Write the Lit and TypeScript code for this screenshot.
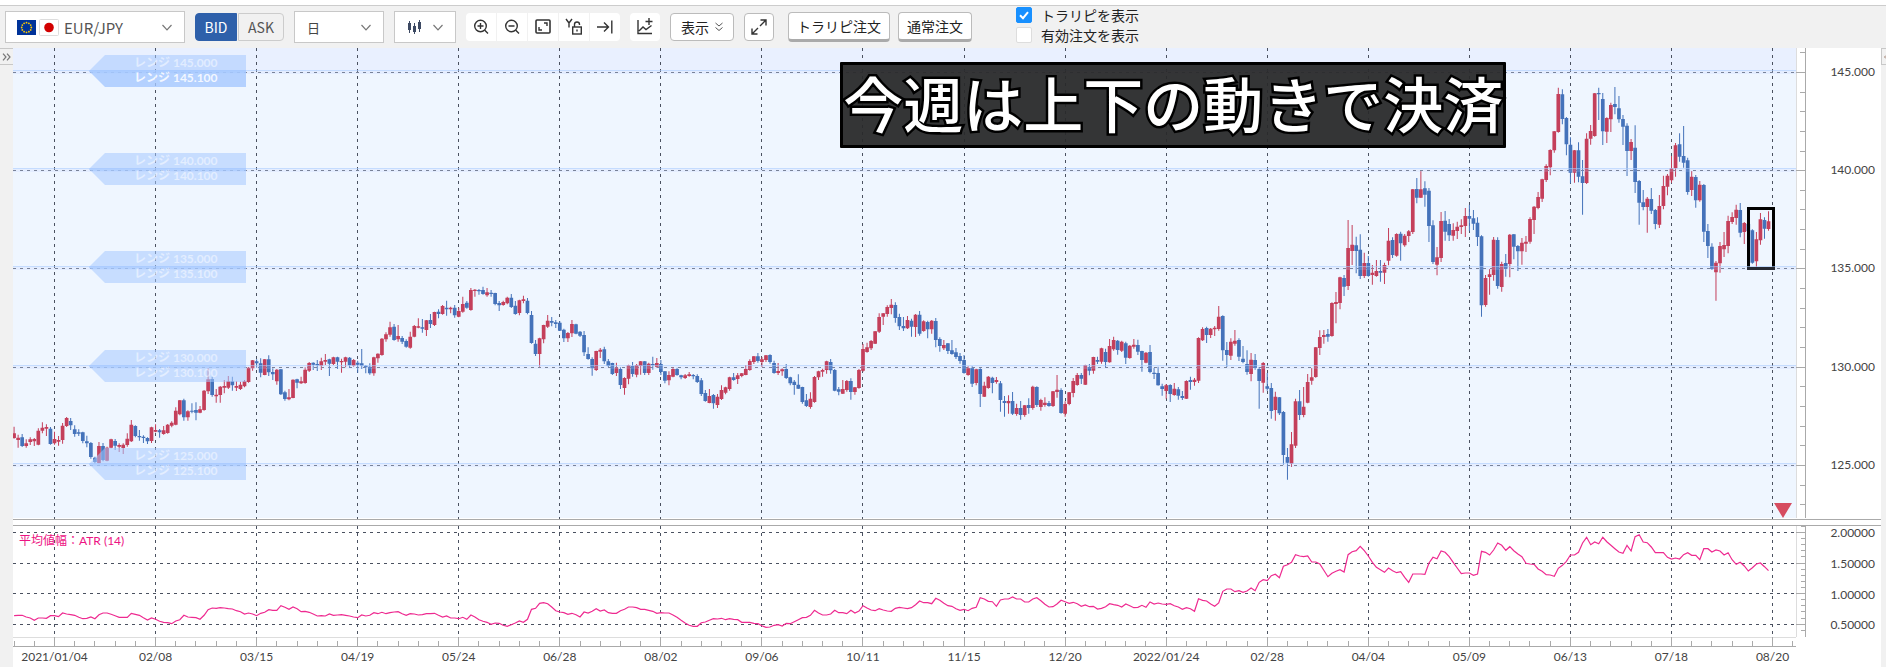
import { LitElement, html, svg, css } from "lit";
import { customElement, state } from "lit/decorators.js";

/* Candles are "colour high,bodyTop,bodyBottom,low"; r = up day, b = down day.
   Levels are thirds of a pixel below the block's base level. */
const CANDLES: { base: number; rows: string }[] = [
  {
    base: 960,
    rows: `r320,340,354,356 r344,353,360,383 b342,352,378,381 r358,370,378,383 r352,358,366,375 r354,357,364,378
r325,332,374,376 r307,323,332,340 r313,321,326,348 b321,326,372,374 r335,357,370,374 r348,360,365,377
r309,317,360,371 r291,294,318,321 b294,303,316,330 b316,328,342,350 b328,337,341,348 b335,337,363,370
b347,364,370,382 b366,369,411,416 b410,413,426,432 r366,378,430,433 b369,378,420,424 r380,383,422,424
r356,358,383,385 b357,363,377,390 r370,375,380,396 r370,374,384,402 r340,356,375,380 r300,314,364,366
b316,318,348,352 b330,348,352,362 b346,350,354,369 b352,354,364,372 r320,322,363,369 r313,330,335,337
b327,331,337,353 r318,331,342,344 r312,314,339,341 r304,308,317,322 r262,272,314,316 r240,241,283,286
b236,241,292,302 r271,274,292,302 b250,272,275,280 b247,270,278,301 r258,268,278,280 r210,212,270,272
r145,178,214,222 b170,177,225,230 r207,224,229,248 r198,200,225,248 r180,198,203,220 r168,184,203,207
b170,184,196,212 r184,198,203,213 r185,194,207,210 r180,184,199,202 r141,143,186,188 r120,121,145,152
b118,124,130,143 b115,130,158,172 r117,118,165,166 b106,118,157,168 b145,156,163,180 r147,149,184,194
b147,148,223,225 b212,217,237,242 r207,232,238,241 r178,179,234,235 b176,178,188,205 r170,184,190,192
r142,149,189,191 r126,129,152,156 b127,128,134,150 b120,132,136,153 r113,124,137,150 r102,120,125,135
b116,118,131,168 r110,112,132,135 b110,112,125,147 r116,123,127,158 r110,112,125,142 b111,113,136,144
r117,120,137,140 b122,128,134,158 b87,130,137,147 b135,137,142,160 b130,140,160,164 r110,112,160,167
r100,101,115,128 r54,56,105,107 r37,43,58,65 r5,22,44,50 b12,20,60,62 r15,48,58,65 b48,54,65,72
b58,63,80,83 r35,50,83,86 r15,18,50,52 r-5,19,23,25 b-3,22,26,38 r0,1,30,48 b-18,0,12,24 r-25,-24,15,18`,
  },
  {
    base: 120,
    rows: `b808,815,822,835 r795,798,822,824 b782,803,808,827 r800,803,808,820 b795,803,826,833 r803,813,830,832
r770,792,815,818 b783,788,803,806`,
  },
  {
    base: 780,
    rows: `r84,90,150,152 r87,89,93,110 b87,90,94,104 b80,90,102,104 r84,97,106,110 b90,98,102,110 b98,99,132,136
b123,129,136,153 r122,126,135,137 r110,113,130,133 b102,113,141,144 b123,137,162,164 r119,121,159,166
r107,118,123,130 b114,122,159,163 b153,165,249,251 b240,251,282,288 r233,235,282,320 r194,195,238,250
r165,182,200,204 b171,183,188,199 b180,187,192,204 b184,188,212,213 b206,209,235,246 r216,219,235,246
r180,192,220,231 b191,193,221,223 b213,215,227,231 b213,225,277,288 b262,282,297,299 b292,297,325,347
r272,273,330,333 r264,269,275,294 b260,268,304,312 b297,304,318,321 b308,309,342,345 r308,323,339,348
b322,327,375,387 r352,354,384,404 r314,316,356,373 b306,318,342,350 r312,315,344,352 r303,304,318,344
b303,304,339,345 r308,311,339,345 b290,312,316,329 r294,309,321,323 b300,312,336,345 b333,334,362,370
r334,345,361,376 r322,327,350,352 b323,327,345,347 b344,346,352,358 r342,346,354,357 r336,343,348,350
b342,345,349,358 b343,348,366,369 b354,361,402,408 b390,399,423,425 r387,408,429,430 b402,405,430,446
r402,410,435,444 r376,390,417,420 r380,382,398,403 r350,352,387,392 b339,352,360,362 r339,346,357,372
r339,340,348,352 r315,327,345,346 r298,303,330,332 r288,289,306,312 b279,289,303,308 r291,298,306,321
r285,286,300,306 b283,285,306,311 b302,309,339,341 r309,333,339,345 r325,328,334,347 b312,327,354,357
b350,352,370,376 b360,365,375,404 b343,374,386,387 b380,381,426,431 b402,421,438,441 r397,416,441,446
r348,351,426,428 r332,334,352,360 r326,330,335,350 r302,304,330,341 b297,306,331,341 b327,330,392,394
b381,388,395,406 r360,387,401,402 r360,363,390,395 b355,363,396,419 r381,382,396,404 r327,330,384,386
r252,267,332,335 r248,262,276,278 r240,243,265,270 r213,214,251,252 r160,171,215,219 r159,160,170,195
r136,141,162,170 r117,134,144,163 b127,135,174,188 b161,171,199,210 b171,198,205,213 r168,180,205,207
b176,182,200,230 r162,164,201,231 b153,164,221,227 r181,184,213,215 b182,186,208,235 r180,182,208,221
b174,183,240,262 b232,237,258,275 r240,255,265,270 b249,250,273,282 b240,271,282,284 b264,277,291,297
b279,288,303,311 b285,300,339,341 r319,324,345,347 b319,324,371,381 r326,328,369,376 b323,327,402,441
r365,377,410,411 r348,350,384,386 b350,353,369,400 r351,360,366,371 b363,370,420,455 b408,423,429,470
r406,423,430,461 b396,423,461,465 r431,444,462,467 b423,444,465,479 r435,436,465,470 b415,435,444,461
r377,380,444,449 b379,381,435,441 r416,420,441,452 r412,428,435,440 b423,429,438,440 r393,394,438,441
r345,389,396,413 b385,390,459,461 r424,432,461,470 r396,397,432,436 r354,363,399,412 r339,345,375,377
b339,345,356,372 r314,315,374,375 b312,321,332,346 r290,291,332,341 b290,300,305,312 r263,265,305,311
b266,276,306,322 r237,258,307,308 r230,240,268,272 b240,242,270,284 r242,245,272,276 b245,250,293,312
r255,257,294,296 r237,254,260,266 b239,255,275,285 b272,273,300,335 r276,278,308,310 b255,276,336,340
b324,338,342,357 b320,339,376,377 b371,379,387,407 r372,376,393,416 b373,375,402,426 r369,386,405,407
b381,388,407,419 b393,408,414,420 r361,363,416,417 b350,360,366,389 r354,359,366,377 r232,234,362,369
r202,207,241,243 b200,204,225,249 r204,206,225,234 r198,203,208,228 r138,170,207,212 b166,168,271,302
b246,270,285,321 r235,245,287,300 r210,242,251,257 b235,240,290,303 b258,296,306,310 b271,312,336,344
r279,299,342,364 b282,300,324,329 b321,327,363,446 r306,309,368,398 b339,379,386,392 b369,384,453,476
r395,410,450,482 b411,412,460,465 b453,456,585,614 b564,591,608,659 r516,553,611,621 r416,424,557,564
b390,424,465,480 r381,440,465,472 r342,366,428,430 r324,352,362,374 r261,262,351,353 r211,231,264,285
r210,225,231,251 b207,222,230,245 r127,129,228,230 r96,126,132,190 r50,52,129,148 b45,54,80,108`,
  },
  {
    base: 450,
    rows: `r210,294,408,420 r225,284,303,345 b260,286,303,370 b253,299,378,387 r308,339,378,384 b318,339,378,380
r345,368,375,404 r330,363,378,380 b330,363,368,395 r338,345,368,402 r234,272,332,346 b262,270,315,324
r250,252,317,320 b245,251,280,332 r252,257,286,290 r240,244,258,276 r117,118,246,252 b84,117,143,160
r63,118,143,144 b94,115,134,170 b114,122,228,276 b211,226,336,342 r291,322,344,376 r186,213,324,336
b183,212,245,272 b207,222,256,273 r220,240,257,272 r215,230,243,267 r208,226,231,252 r174,198,228,261
b164,198,206,243 b180,205,221,240 b202,218,261,288 b256,259,466,500 r375,384,465,470 r357,373,381,434
r261,269,375,392 b262,270,408,416 r335,342,411,425 b312,339,356,380 r252,254,342,382 b252,253,290,328
b285,288,304,363 r264,278,304,344 r258,275,281,306 r202,207,275,281 r168,170,210,252 r126,141,174,178
r86,88,146,156`,
  },
  {
    base: 150,
    rows: `r343,348,390,396 r298,300,352,376 r243,244,301,308 r113,132,246,248 b118,133,207,223 b201,204,283,316
b262,284,368,400 r300,301,368,398 b277,301,380,397 b330,379,399,494 r250,266,399,402 r225,243,266,284
r129,130,258,260 b113,129,133,210 b129,147,244,285 r202,204,245,279 r158,165,208,246 b111,162,171,193
b138,175,208,218 b195,207,230,285 b220,227,303,378 r267,276,303,330 b226,293,396,429 b390,393,458,524
b420,457,471,481 r441,446,471,548 b414,447,482,492 b477,480,522,538 r435,468,524,534 r377,408,468,478
r372,377,410,436 r318,355,391,398 r279,286,355,380 b250,283,320,335 b228,318,338,353 b323,331,426,434
r363,380,420,438 b375,381,451,473 r393,404,451,455 b402,405,545,576 b522,543,588,624 b580,590,657,660
r633,638,667,752 r576,588,640,668 r546,585,598,621 r497,513,588,610 r487,501,516,522 r464,479,504,524
b459,480,548,562 r516,519,546,582 b519,522,543,550 b538,541,638,641 r546,568,634,654 r489,508,571,584
b502,510,536,566 r484,514,537,542`,
  },
];

/* ATR(14), one value per candle, same units as above. */
const ATR: { base: number; rows: string }[] = [
  {
    base: 960,
    rows: `887 886 886 891 894 901 894 894 895 887 887 890 879 882 884 886 892 896 895 891 896 884 879 879 883 887 892
892 892 880 883 886 893 900 894 898 904 907 908 911 903 899 886 891 892 893 898 886 869 864 865 863 864 866 867 872
875 882 879 882 887 880 877 869 871 871 857 862 868 861 866 875 874 877 882 888 887 888 882 886 885 884 886 888 891
893 885 888 886 878 881 877 881 878 876 875 881 886 881 882 885 884 881 881 880 886 891 888 894 894 896 892 898 885
891 899`,
  },
  {
    base: 1500,
    rows: `364 367 373 369 370 376 379 374 369 363 367 358 328 325 310 308 311 321 332 336 338 343 340 344 351 336
339 334 326 333 330 338 340 340 332 328 321 321 323 328 328 331 334 340 338 339 339 345 352 361 369 376 379 379 368
366 361 356 357 355 359 356 358 359 367 367 367 370 371 377 382 381 376 374 378 370 371 365 359 353 352 346 331 339
345 345 342 331 338 338 341 331 339 333 317 324 330 332 326 330 333 334 325 322 324 326 323 314 303 308 308 311 295
301 310 317 319 326 331 328 332 325 322 293 297 304 305 319 300 297 297 291 297 297 306 306 297 293 302 313 321 320
312 301 305 310 307 311 319 315 320 319 327 325 320 311 314 316 321 312 317 323 322 316 322 306 312 309 312 313 311
317 321 328 323 326 334 296 301 303 312 319 309 274 267 267 275 272 277 273 264 272 247 239 242 227 223 233 199 194
187 164 168 170 168 186 186 192 211 230 220 214 209 216 164 155 152 139 152 168 187 202 209 217 204 212 218 215 232
247 222 222 222 223 189 172 176 153 157 170 187 204 221 219 219 226 222 154 157 165 150 129 136 151 140 152 162`,
  },
  {
    base: 1320,
    rows: `350 370 372 373 387 394 404 405 409 385 376 364 345 345 337 309 292 314 306 311 292 305 316 326 336 340 316
333 290 284 306 308 321 338 338 338 352 357 354 357 344 338 346 346 359 326 326 336 330 333 345 338 359 373 367 378
393 383 372 369 380 392`,
  },
];

const PLOT_W = 1783;
const PRICE_TOP = 48;
const PRICE_H = 471;
const ATR_TOP = 526;
const ATR_H = 111;
const STEP = 4.0425;
const FIRST = 41.5 - 10 * STEP;

const pct = (x: number) => `${((x / PLOT_W) * 100).toFixed(4)}%`;
const priceY = (p: number) => 24.4 + (145 - p) * 19.65;
const atrY = (v: number) => 6.4 + (2 - v) * 61.2;

const candles = CANDLES.flatMap(({ base, rows }) =>
  rows.trim().split(/\s+/).map((row) => ({
    up: row[0] === "r",
    v: row.slice(1).split(",").map((n) => (base + Number(n)) / 3 - PRICE_TOP),
  })),
);
const atrPoints = ATR.flatMap(({ base, rows }) =>
  rows.trim().split(/\s+/).map((n) => (base + Number(n)) / 3 - ATR_TOP),
)
  .map((y, i) => `${(FIRST + i * STEP).toFixed(1)},${y.toFixed(1)}`)
  .join(" ");

const DATES = [
  "2021/01/04", "02/08", "03/15", "04/19", "05/24", "06/28", "08/02", "09/06", "10/11",
  "11/15", "12/20", "2022/01/24", "02/28", "04/04", "05/09", "06/13", "07/18", "08/20",
];
const dateX = (k: number) => 41.5 + k * 101.06;
const PRICES = [145, 140, 135, 130, 125];

const chevron = html`<svg class="chev" width="10" height="7" viewBox="0 0 10 7" aria-hidden="true">
  <path d="M.5 1 5 5.8 9.5 1" fill="none" stroke="#777" stroke-width="1.2" />
</svg>`;

@customElement("trade-toolbar")
export class TradeToolbar extends LitElement {
  @state() side = "BID";

  static styles = css`
    :host {
      display: flex;
      align-items: center;
      gap: 10px;
      height: 42px;
      padding-left: 5px;
      background: #f1f1f1;
      border-top: 1px solid #ccc;
      font: 14px "Noto Sans CJK JP", sans-serif;
      color: #222;
    }
    button, select, input { font: inherit; color: inherit; margin: 0; }
    button { padding: 0; cursor: pointer; }
    .combo {
      display: flex;
      align-items: center;
      box-sizing: border-box;
      height: 32px;
      padding: 0 12px;
      background: #fff;
      border: 1px solid #c8c8c8;
    }
    .combo select {
      flex: 1;
      min-width: 0;
      appearance: none;
      border: 0;
      padding: 0;
      background: none;
      color: #555;
      font-size: 15px;
    }
    .pair { width: 180px; gap: 3px; padding-left: 11px; }
    .pair select { margin-left: 2px; }
    .span { width: 90px; }
    .span select { font-size: 13px; color: #444; }
    .kind { width: 62px; position: relative; justify-content: space-between; }
    .kind select { position: absolute; inset: 0; opacity: 0; }
    .sides { display: flex; gap: 1px; }
    .sides button {
      box-sizing: border-box;
      width: 46px;
      height: 28px;
      border: 1px solid #ccc;
      border-radius: 0 4px 4px 0;
      background: #f1f1f1;
      color: #555;
    }
    .sides button:first-child { width: 42px; border-radius: 4px 0 0 4px; }
    .sides button.on { background: #2e60aa; border-color: #2e60aa; color: #fff; }
    .tools { display: flex; gap: 1px; border-radius: 4px; overflow: hidden; }
    .tool {
      display: flex;
      align-items: center;
      justify-content: center;
      box-sizing: border-box;
      width: 30px;
      height: 28px;
      border: 0;
      background: #fff;
    }
    .solo { border-radius: 4px; }
    .boxed { border: 1px solid #bbb; border-radius: 4px; }
    .view { width: 64px; gap: 6px; }
    .orders { display: flex; gap: 8px; margin-left: 4px; }
    .order {
      height: 30px;
      padding: 0 8px;
      border: 1px solid #bbb;
      border-bottom: 3px solid #aaa;
      border-radius: 4px;
      background: #fff;
      line-height: 22px;
    }
    .checks { display: grid; grid-template-rows: 21px 20px; margin-left: 34px; margin-bottom: 5px; }
    .check { display: flex; align-items: center; gap: 9px; }
    .check input {
      appearance: none;
      width: 16px;
      height: 16px;
      border: 1px solid #ddd;
      border-radius: 2px;
      background: #fff;
    }
    .check input:checked {
      border-color: #1890ff;
      background: #1890ff
        url("data:image/svg+xml,%3Csvg xmlns='http://www.w3.org/2000/svg' viewBox='0 0 14 14'%3E%3Cpath d='M3 7.2l3 3 5-6' fill='none' stroke='white' stroke-width='2'/%3E%3C/svg%3E");
    }
  `;

  icon(body: unknown) {
    return html`<svg width="18" height="18" viewBox="0 0 18 18" fill="none" stroke="#333" stroke-width="1.4" aria-hidden="true">${body}</svg>`;
  }

  render() {
    const stars = Array.from({ length: 12 }, (_, i) => {
      const a = (i * Math.PI) / 6;
      return svg`<circle cx=${9.5 + 4.8 * Math.sin(a)} cy=${7.5 - 4.8 * Math.cos(a)} r=".9" fill="#fc0" />`;
    });
    return html`
      <label class="combo pair">
        <svg width="19" height="15" aria-hidden="true"><rect width="19" height="15" fill="#039" />${stars}</svg>
        <svg width="20" height="17" aria-hidden="true">
          <rect x=".5" y=".5" width="19" height="16" rx="1" fill="#fff" stroke="#ddd" />
          <circle cx="10" cy="8.5" r="4.8" fill="#d20000" />
        </svg>
        <select aria-label="通貨ペア"><option>EUR/JPY</option></select>
        ${chevron}
      </label>
      <div class="sides">
        ${["BID", "ASK"].map(
          (s) => html`<button class=${this.side === s ? "on" : ""} @click=${() => (this.side = s)}>${s}</button>`,
        )}
      </div>
      <label class="combo span"><select aria-label="足種"><option>日</option></select>${chevron}</label>
      <label class="combo kind">
        <svg width="15" height="17" viewBox="0 0 15 17" stroke="#3d4a63" aria-hidden="true">
          <path d="M2.5 2v12M7.5 4v11M12.5 1v12" />
          <path d="M2.5 4v7M7.5 7v6M12.5 3v7" stroke-width="3" />
        </svg>
        <select aria-label="チャート種類"><option>ローソク足</option></select>
        ${chevron}
      </label>
      <div class="tools">
        <button class="tool" aria-label="拡大">
          ${this.icon(svg`<circle cx="8.5" cy="8" r="5.8" /><path d="M12.8 12.3 16 15.5M5.5 8h6M8.5 5v6" />`)}
        </button>
        <button class="tool" aria-label="縮小">
          ${this.icon(svg`<circle cx="8.5" cy="8" r="5.8" /><path d="M12.8 12.3 16 15.5M5.5 8h6" />`)}
        </button>
        <button class="tool" aria-label="全体">
          ${this.icon(svg`<rect x="2" y="2" width="14" height="13" rx="1" stroke-width="1.6" /><path d="M10 5h3v3M8 12H5V9" />`)}
        </button>
        <button class="tool" aria-label="Y軸固定">
          ${this.icon(svg`<path d="M1 1l3 4 3-4M4 5v4.5" /><rect x="7.7" y="9" width="8.6" height="7" /><path d="M9.5 9V6.2c0-3 5-3 5 0v.8M12 11.5v2" />`)}
        </button>
        <button class="tool" aria-label="最新へ">
          ${this.icon(svg`<path d="M1 9h11.5M8 4.5 12.5 9 8 13.5M15.8 2.5v13" />`)}
        </button>
      </div>
      <button class="tool solo" aria-label="テクニカル追加">
        ${this.icon(svg`<path d="M2 2v13.5h14M3 13l4-4 3 2.5 5.5-4M13 0v7M9.5 3.5h7" />`)}
      </button>
      <button class="tool boxed view">
        表示
        <svg width="8" height="10" viewBox="0 0 8 10" fill="none" stroke="#555" aria-hidden="true"><path d="M.5 1 4 4 7.5 1M.5 5.5 4 8.5 7.5 5.5" /></svg>
      </button>
      <button class="tool boxed" aria-label="全画面">
        ${this.icon(svg`<path d="M10 8l5.5-5.5M10.5 2h5.5v5.5M8 10l-5.5 5.5M7.5 16H2v-5.5" />`)}
      </button>
      <div class="orders">
        <button class="order">トラリピ注文</button>
        <button class="order">通常注文</button>
      </div>
      <div class="checks">
        <label class="check"><input type="checkbox" checked />トラリピを表示</label>
        <label class="check"><input type="checkbox" />有効注文を表示</label>
      </div>
    `;
  }
}

@customElement("price-chart")
export class PriceChart extends LitElement {
  static styles = css`
    :host {
      display: grid;
      grid-template-columns: minmax(0, 1fr) 85px;
      background: #fff;
      font: 12px Lato, "Noto Sans CJK JP", sans-serif;
    }
    svg { display: block; width: 100%; }
    .pane { position: relative; }
    .price { height: 471px; }
    .atr { height: 111px; }
    .time { height: 30px; overflow: visible; }
    .split {
      grid-column: 1 / -1;
      box-sizing: border-box;
      height: 7px;
      border: solid #aaa;
      border-width: 1px 0;
    }
    .crisp { shape-rendering: crispEdges; }
    .grid { stroke: #4a5160; stroke-width: 1; stroke-dasharray: 3 4; }
    .hgrid { stroke: #6a7180; }
    .range { fill: #a5c8ff; fill-opacity: 0.55; }
    .range.lit { fill-opacity: 0.8; }
    .tag { fill: #fff; fill-opacity: 0.5; font-weight: 700; }
    .tag.strong { fill-opacity: 0.85; }
    .axis { stroke: #aaa; stroke-width: 1; }
    .edge { stroke: #ddd; }
    .num { fill: #444; }
    .legend { fill: #ed1383; }
    .up { fill: #c43f5b; }
    .down { fill: #4472ba; }
    .atrline { fill: none; stroke: #ee2a90; stroke-width: 1.2; }
    .headline {
      position: absolute;
      left: 46.4%;
      top: 14px;
      margin: 0;
      box-sizing: border-box;
      height: 86px;
      border: 3px solid #000;
      border-radius: 1px;
      background: rgba(40, 40, 41, 0.94);
      color: #fff;
      font: 500 60px/74px "Noto Sans CJK JP", sans-serif;
      white-space: nowrap;
      -webkit-text-stroke: 5px #000;
      paint-order: stroke fill;
    }
  `;

  vGrid() {
    return DATES.map((_, k) => svg`<line class="grid" x1=${pct(dateX(k))} x2=${pct(dateX(k))} y1="0" y2="100%" />`);
  }

  rangeTag(p: number) {
    const y = Math.floor(priceY(p)) - 1;
    const lit = p === 145;
    return svg`
      <path class="range" d="M76 ${y} 92 ${y - 16}H233V${y + 2}H77z" />
      <path class="range ${lit ? "lit" : ""}" d="M76 ${y} L77 ${y - 1}H233V${y + 16}H92z" />
      <text class="tag" x="121" y=${y - 4}>レンジ ${p}.000</text>
      <text class="tag ${lit ? "strong" : ""}" x="121" y=${y + 11}>レンジ ${p}.100</text>`;
  }

  render() {
    return html`
      <div class="pane">
        <svg class="price" role="img" aria-label="EUR/JPY 日足">
          <rect width="100%" height="470" fill="#eff6ff" />
          <rect width="100%" height="22" fill="#e9f0ff" />
          <g class="crisp">
            ${this.vGrid()}
            ${PRICES.map((p) => svg`<line class="grid hgrid" x1="0" x2="100%" y1=${priceY(p)} y2=${priceY(p)} />`)}
          </g>
          <svg viewBox="0 0 ${PLOT_W} ${PRICE_H}" preserveAspectRatio="none" width="100%" height=${PRICE_H}>
            ${candles.map(({ up, v: [h, t, b, l] }, i) => {
              const x = FIRST + i * STEP;
              return svg`<path class=${up ? "up" : "down"} d="M${(x - 0.5).toFixed(2)} ${h.toFixed(1)}h1V${l.toFixed(1)}h-1zM${(x - 1.85).toFixed(2)} ${t.toFixed(1)}h3.7V${b.toFixed(1)}h-3.7z" />`;
            })}
            <rect x="1735.5" y="160.5" width="25" height="60" fill="none" stroke="#000" stroke-width="3" />
            <path d="M1761 455h18l-9 15z" fill="#d64c60" />
          </svg>
          <g class="crisp">
            ${PRICES.map((p) => svg`
              <rect x="0" y=${Math.floor(priceY(p)) - 2} width="100%" height="1" fill="#a8ccff" fill-opacity=".6" />
              <rect x="0" y=${Math.floor(priceY(p)) - 1} width="100%" height="3" fill="#b8cdff" fill-opacity=".2" />`)}
          </g>
          ${PRICES.map((p) => this.rangeTag(p))}
        </svg>
        <h1 class="headline">今週は上下の動きで決済</h1>
      </div>
      <svg class="price" aria-label="価格">
        <g class="crisp">
          <line class="edge" x1=".5" x2=".5" y1="0" y2="470" />
          <line class="axis" x1="9.5" x2="9.5" y1="0" y2="470" />
          ${Array.from({ length: 24 }, (_, i) => 146 - i).map((p) => svg`
            <line class="axis" x1=${p % 5 ? 4 : 0} x2="9" y1=${priceY(p)} y2=${priceY(p)} />`)}
        </g>
        ${PRICES.map((p) => svg`<text class="num" x="79" y=${Math.floor(priceY(p)) + 4} text-anchor="end">${p}.000</text>`)}
      </svg>
      <div class="split"></div>
      <svg class="atr" role="img" aria-label="ATR">
        <g class="crisp">
          ${this.vGrid()}
          ${[2, 1.5, 1, 0.5].map((v) => svg`<line class="grid" x1="0" x2="100%" y1=${atrY(v)} y2=${atrY(v)} />`)}
        </g>
        <svg viewBox="0 0 ${PLOT_W} ${ATR_H}" preserveAspectRatio="none" width="100%" height=${ATR_H}>
          <polyline class="atrline" points=${atrPoints} />
        </svg>
        <text class="legend" x="6" y="19">平均値幅：ATR (14)</text>
      </svg>
      <svg class="atr" aria-label="ATR値">
        <g class="crisp">
          <line class="edge" x1=".5" x2=".5" y1="0" y2="111" />
          <line class="axis" x1="9.5" x2="9.5" y1="0" y2="111" />
          ${Array.from({ length: 18 }, (_, i) => 21 - i).map((n) => svg`
            <line class="axis" x1=${n % 5 ? 5 : 0} x2="9" y1=${atrY(n / 10)} y2=${atrY(n / 10)} />`)}
        </g>
        ${[2, 1.5, 1, 0.5].map((v) => svg`<text class="num" x="79" y=${Math.round(atrY(v)) + 5} text-anchor="end">${v.toFixed(5)}</text>`)}
      </svg>
      <svg class="time" aria-label="日付">
        <g class="crisp">
          <line class="edge" x1="0" x2="100%" y1=".5" y2=".5" />
          <line class="axis" x1="0" x2="100%" y1="9.5" y2="9.5" />
          ${Array.from({ length: 89 }, (_, i) => i - 2).map((i) => {
            const x = pct(41.5 + i * 20.212);
            return svg`<line class="axis" x1=${x} x2=${x} y1=${i % 5 ? 4 : 0} y2="9" />`;
          })}
        </g>
        ${DATES.map((d, k) => svg`<text class="num" x=${pct(dateX(k))} y="24" text-anchor="middle">${d}</text>`)}
      </svg>
    `;
  }
}

@customElement("app-root")
export class AppRoot extends LitElement {
  static styles = css`
    :host { display: block; background: #fff; padding-top: 5px; overflow: hidden; }
    .work { display: grid; grid-template-columns: 13px minmax(0, 1fr) 5px; background: #f1f1f1; }
    .fold {
      display: flex;
      align-items: center;
      justify-content: center;
      box-sizing: border-box;
      width: 100%;
      height: 17px;
      padding: 0;
      border: solid #c8c8c8;
      border-width: 1px 0;
      background: #f1f1f1;
      overflow: hidden;
    }
    .right { border-left-width: 1px; justify-content: flex-end; }
  `;

  render() {
    return html`
      <trade-toolbar></trade-toolbar>
      <main class="work">
        <div>
          <button class="fold" aria-label="開く">
            <svg width="9" height="8" viewBox="0 0 9 8" fill="none" stroke="#777" stroke-width="1.2"><path d="M1 .7 4 4 1 7.3M5 .7 8 4 5 7.3" /></svg>
          </button>
        </div>
        <price-chart></price-chart>
        <div>
          <button class="fold right" aria-label="閉じる">
            <svg width="2" height="4" viewBox="0 0 2 4" fill="none" stroke="#a08070"><path d="M2 .5.5 2 2 3.5" /></svg>
          </button>
        </div>
      </main>
    `;
  }
}
